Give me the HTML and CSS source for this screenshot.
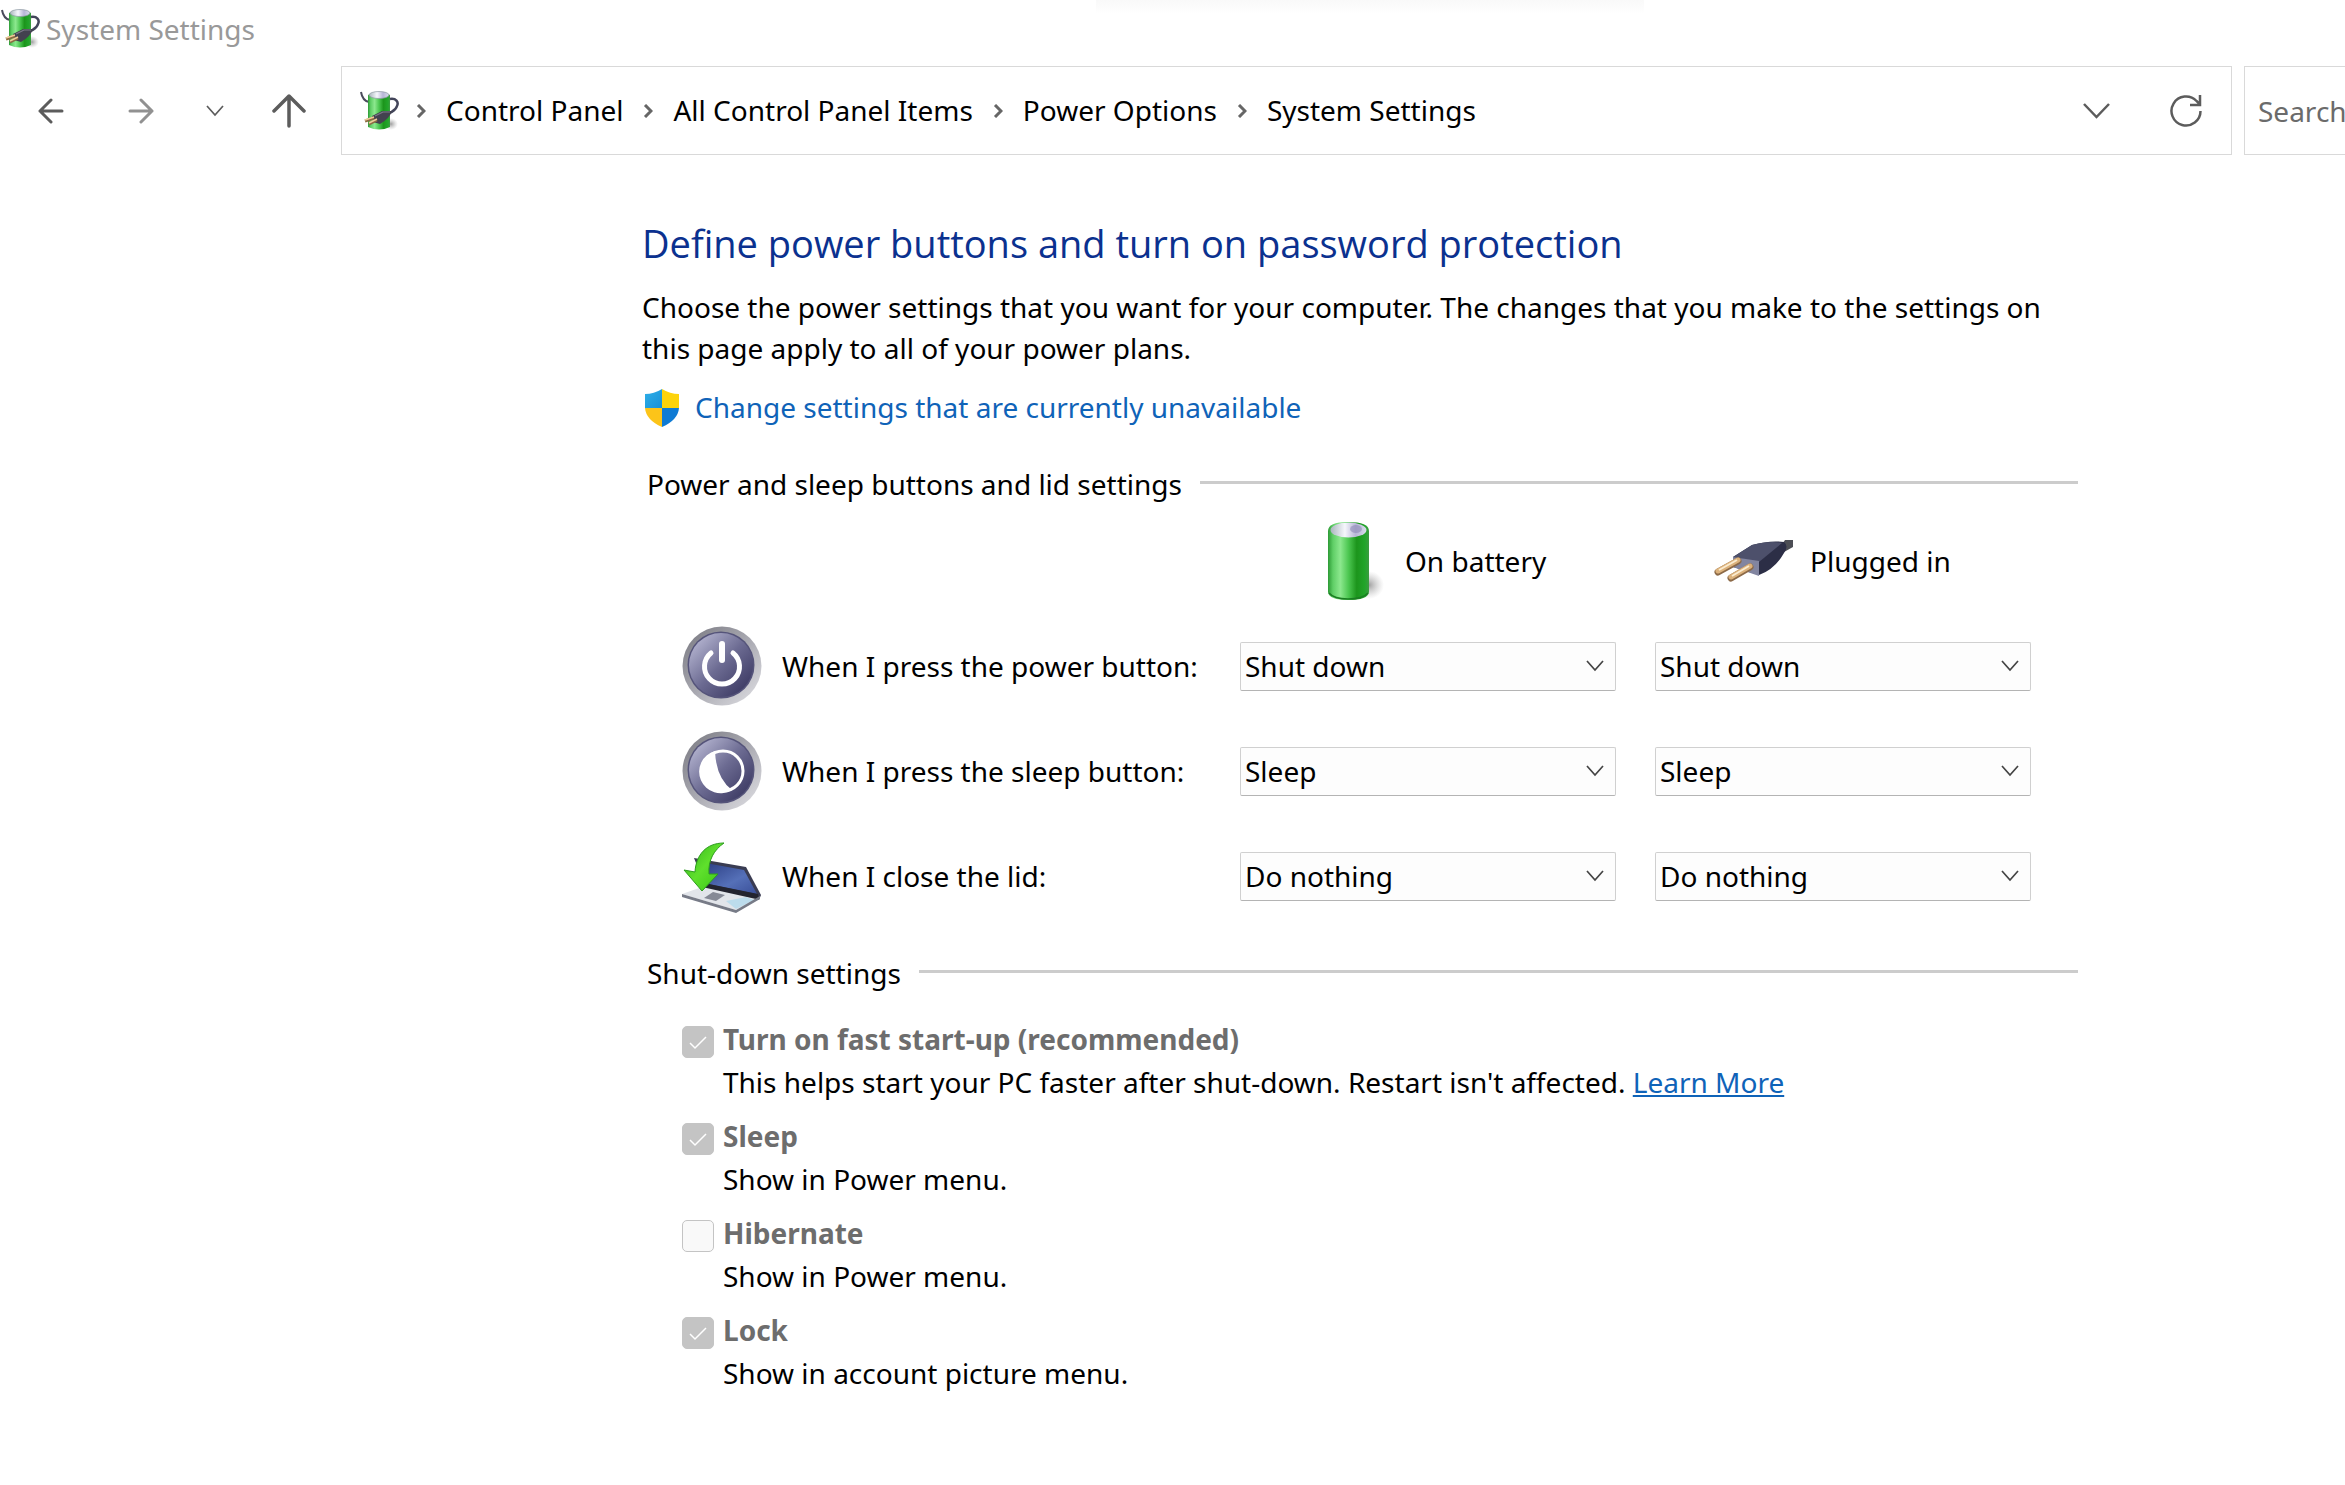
FILE: index.html
```html
<!DOCTYPE html>
<html lang="en-GB">
<head>
<meta charset="utf-8">
<title>System Settings</title>
<link rel="stylesheet" href="styles.css">
</head>
<body>
<svg class="defs" width="0" height="0" aria-hidden="true">
  <defs>
    <linearGradient id="green" x1="0" x2="1" y1="0" y2="0">
      <stop offset="0" stop-color="#2c9a35"/><stop offset=".12" stop-color="#5fce66"/><stop offset=".3" stop-color="#8ce88e"/><stop offset=".5" stop-color="#4cc751"/><stop offset=".7" stop-color="#1c951c"/><stop offset=".9" stop-color="#22a52a"/><stop offset="1" stop-color="#3c9c42"/>
    </linearGradient>
    <linearGradient id="cap" x1="0" x2="1" y1="0" y2="0">
      <stop offset="0" stop-color="#a9b5bd"/><stop offset=".4" stop-color="#f6f7fc"/><stop offset=".7" stop-color="#b7b5d6"/><stop offset="1" stop-color="#d8dcea"/>
    </linearGradient>
    <radialGradient id="shade">
      <stop offset="0" stop-color="#777" stop-opacity=".7"/><stop offset="1" stop-color="#aaa" stop-opacity="0"/>
    </radialGradient>
    <linearGradient id="rim" x1="0" x2="1" y1="0" y2="1">
      <stop offset="0" stop-color="#77777f"/><stop offset=".5" stop-color="#a9a9b1"/><stop offset="1" stop-color="#e2e2e6"/>
    </linearGradient>
    <linearGradient id="face" x1="0" x2="1" y1="0" y2="1">
      <stop offset=".1" stop-color="#b4b4d0"/><stop offset=".5" stop-color="#6c6b92"/><stop offset=".9" stop-color="#3c3a63"/>
    </linearGradient>
    <linearGradient id="screen" x1="0" x2="1" y1="0" y2="1">
      <stop offset="0" stop-color="#27397e"/><stop offset=".6" stop-color="#5570b8"/><stop offset="1" stop-color="#3a4f98"/>
    </linearGradient>
    <linearGradient id="arrow" x1="0" x2="1" y1="0" y2="1">
      <stop offset="0" stop-color="#2fae1c"/><stop offset=".5" stop-color="#5fe02c"/><stop offset="1" stop-color="#37c414"/>
    </linearGradient>
    <linearGradient id="blue" x1="0" x2="1" y1="0" y2="1">
      <stop offset="0" stop-color="#2fb0e8"/><stop offset="1" stop-color="#1890d8"/>
    </linearGradient>
    <symbol id="power-options" viewBox="0 0 40 40">
      <ellipse cx="32" cy="33" rx="7" ry="6" fill="url(#shade)"/>
      <path d="M2 1 C3 7 5 10 10 11" fill="none" stroke="#4a4b5c" stroke-width="2"/>
      <path d="M9 4 Q20-2 31 4 V36 Q20 41 9 36z" fill="url(#green)"/>
      <ellipse cx="20" cy="4" rx="10" ry="3.500" fill="url(#cap)" stroke="#8d9aa2" stroke-width=".7"/>
      <path d="M31 8 C37 7 40 11 38 15 C37 19 34 20 31 22" fill="none" stroke="#43455a" stroke-width="2.500"/>
      <path d="M13 25 L23 20 L33 20 Q31 27 21 33 L14 31z" fill="#43424f"/>
      <path d="M16 25 L24 21 L31 21" stroke="#7c7a8a" stroke-width="1.200" fill="none"/>
      <path d="M6 30 L15 27 M10 33 L18 29" stroke="#8b6a42" stroke-width="3"/>
      <path d="M6 29 L15 26 M10 32 L18 28" stroke="#edcb98" stroke-width="1.500"/>
    </symbol>
    <symbol id="chevron" viewBox="0 0 18 12"><path d="M1 1 L9 10 L17 1" fill="none" stroke="currentColor" stroke-width="1.700"/></symbol>
    <symbol id="crumb" viewBox="0 0 10 14"><path d="M2 1 L8 7 L2 13" fill="none" stroke="currentColor" stroke-width="3"/></symbol>
    <symbol id="tick" viewBox="0 0 32 32"><path d="M8 17 L13 22 L24 11" fill="none" stroke="#fff" stroke-width="1.500"/></symbol>
  </defs>
</svg>

<header class="window-head">
  <div class="titlebar">
    <svg class="app-icon" aria-hidden="true"><use href="#power-options"/></svg>
    <span>System Settings</span>
  </div>
  <div class="toolbar">
    <div class="nav-buttons">
      <button class="nav-button" aria-label="Back"><svg width="26" height="26" viewBox="0 0 26 26"><path d="M24 13H2M13 2L2 13L13 24" fill="none" stroke="#5c5c5c" stroke-width="3" stroke-linecap="round" stroke-linejoin="round"/></svg></button>
      <button class="nav-button" aria-label="Forward"><svg width="26" height="26" viewBox="0 0 26 26"><path d="M2 13H24M13 2L24 13L13 24" fill="none" stroke="#919191" stroke-width="3" stroke-linecap="round" stroke-linejoin="round"/></svg></button>
      <button class="nav-button narrow" aria-label="Recent locations"><svg width="18" height="12"><use href="#chevron"/></svg></button>
      <button class="nav-button" aria-label="Up"><svg width="34" height="34" viewBox="0 0 34 34"><path d="M17 32V3M2 17L17 2L32 17" fill="none" stroke="#5c5c5c" stroke-width="3.500" stroke-linecap="round" stroke-linejoin="round"/></svg></button>
    </div>
    <nav class="address" aria-label="Address">
      <svg class="app-icon" aria-hidden="true"><use href="#power-options"/></svg>
      <svg class="crumb-sep" aria-hidden="true"><use href="#crumb"/></svg>
      <a href="#">Control Panel</a>
      <svg class="crumb-sep" aria-hidden="true"><use href="#crumb"/></svg>
      <a href="#">All Control Panel Items</a>
      <svg class="crumb-sep" aria-hidden="true"><use href="#crumb"/></svg>
      <a href="#">Power Options</a>
      <svg class="crumb-sep" aria-hidden="true"><use href="#crumb"/></svg>
      <a href="#">System Settings</a>
      <div class="address-tools">
        <button class="nav-button" aria-label="Previous locations"><svg width="27" height="16" viewBox="0 0 27 16"><path d="M1 1L13.500 14L26 1" fill="none" stroke="#5c5c5c" stroke-width="2.500"/></svg></button>
        <button class="nav-button" aria-label="Refresh"><svg width="34" height="34" viewBox="0 0 34 34"><path d="M31.500 17A14.500 14.500 0 1 1 27.500 7L31 10.500M31 1V11H21" fill="none" stroke="#5c5c5c" stroke-width="2.500"/></svg></button>
      </div>
    </nav>
    <input class="search" type="text" placeholder="Search" aria-label="Search Control Panel">
  </div>
</header>

<main class="content">
  <h1>Define power buttons and turn on password protection</h1>
  <p class="intro">Choose the power settings that you want for your computer. The changes that you make to the settings on this page apply to all of your power plans.</p>
  <a class="admin-link" href="#">
    <svg width="36" height="38" viewBox="0 0 36 38" aria-hidden="true">
      <path d="M18 0 Q10 5 1 5 V19 H18z" fill="url(#blue)"/>
      <path d="M18 0 Q26 5 35 5 V19 H18z" fill="#fdd30b"/>
      <path d="M1 19 Q2 31 18 38 V19z" fill="#fcc419"/>
      <path d="M35 19 Q34 31 18 38 V19z" fill="#0f7bd4"/>
    </svg>
    <span>Change settings that are currently unavailable</span>
  </a>

  <section class="group">
    <h2>Power and sleep buttons and lid settings</h2>
    <div class="lid-grid">
      <div class="column-head battery">
        <svg width="64" height="80" viewBox="0 0 64 80" aria-hidden="true">
          <ellipse cx="41" cy="64" rx="15" ry="14" fill="url(#shade)"/>
          <path d="M0 10 Q0 1 20 1 Q41 1 41 10 V71 Q40 79 20 79 Q1 79 0 71z" fill="url(#green)"/>
          <path d="M1 72 Q6 78 20 78 Q35 78 40 72" fill="none" stroke="#1b7e22" stroke-width="1.500"/>
          <ellipse cx="20.500" cy="9" rx="18" ry="7.500" fill="url(#cap)"/>
          <ellipse cx="28" cy="8" rx="6" ry="4" fill="#8d89b8" opacity=".6"/>
        </svg>
        <span>On battery</span>
      </div>
      <div class="column-head plug">
        <svg width="80" height="44" viewBox="0 0 80 44" aria-hidden="true">
          <path d="M66 8 L71 1 H79 V8 L70 13z" fill="#4c4e55"/>
          <path d="M19 18 L38 6 Q56 1 70 3 Q75 7 70 14 Q61 30 45 36 L19 28z" fill="#2c2e46"/>
          <path d="M19 18 L38 6 Q56 1 68 4 L45 23z" fill="#4d506b"/>
          <path d="M19 18 L45 22 V37 L19 28z" fill="#8285a0"/>
          <path d="M4 33 L24 22 M17 39 L36 28" stroke="#8c6a48" stroke-width="7" stroke-linecap="round"/>
          <path d="M4 32 L24 21 M17 38 L36 27" stroke="#dcb27c" stroke-width="5" stroke-linecap="round"/>
          <path d="M5 31 L23 21 M18 37 L35 27" stroke="#fbecd0" stroke-width="2"/>
        </svg>
        <span>Plugged in</span>
      </div>

      <div class="row-label">
        <svg width="80" height="80" viewBox="0 0 80 80" aria-hidden="true">
          <circle cx="40" cy="40" r="39.500" fill="url(#rim)"/><circle cx="39" cy="39" r="33.500" fill="#55547a"/><circle cx="39" cy="39" r="32" fill="url(#face)"/>
          <path d="M29 27 A17.500 17.500 0 1 0 51 27" fill="none" stroke="#fff" stroke-width="5" stroke-linecap="round"/><path d="M40 18V34" stroke="#fff" stroke-width="6" stroke-linecap="round"/>
        </svg>
        <span id="lbl-power">When I press the power button:</span>
      </div>
      <div class="select"><select aria-labelledby="lbl-power"><option>Shut down</option></select><svg><use href="#chevron"/></svg></div>
      <div class="select"><select aria-labelledby="lbl-power"><option>Shut down</option></select><svg><use href="#chevron"/></svg></div>

      <div class="row-label">
        <svg width="80" height="80" viewBox="0 0 80 80" aria-hidden="true">
          <circle cx="40" cy="40" r="39.500" fill="url(#rim)"/><circle cx="39" cy="39" r="33.500" fill="#55547a"/><circle cx="39" cy="39" r="32" fill="url(#face)"/>
          <circle cx="41" cy="40" r="20" fill="none" stroke="#fff" stroke-width="3"/><path d="M33 20 A21.500 21.500 0 1 0 50 59 Q34 47 33 20z" fill="#fff"/>
        </svg>
        <span id="lbl-sleep">When I press the sleep button:</span>
      </div>
      <div class="select"><select aria-labelledby="lbl-sleep"><option>Sleep</option></select><svg><use href="#chevron"/></svg></div>
      <div class="select"><select aria-labelledby="lbl-sleep"><option>Sleep</option></select><svg><use href="#chevron"/></svg></div>

      <div class="row-label">
        <svg width="80" height="80" viewBox="0 0 80 80" aria-hidden="true">
          <path d="M12 22 L64 31 L79 59 L77 64 L24 52z" fill="#3a3c52"/>
          <path d="M18 26 L62 34 L75 58 L26 48z" fill="url(#screen)"/>
          <path d="M22 47 L76 58 L77 63 L60 66 L22 54z" fill="#23242f"/>
          <path d="M0 58 L20 51 L74 63 L54 74z" fill="#e2e5ea"/>
          <path d="M44 65 L64 61 L72 64 L54 73z" fill="#bcdcec"/>
          <path d="M0 58 L54 74 L78 60 V63 L54 77 L0 61z" fill="#777b87"/>
          <path d="M22 62 L31 56 L43 59 L34 65z" fill="#858995"/>
          <path d="M42 7 C24 7 14 19 13 36 L2 34 L20 55 L36 38 L27 38 C26 24 32 14 42 7z" fill="url(#arrow)" stroke="#2c9c1d"/>
        </svg>
        <span id="lbl-lid">When I close the lid:</span>
      </div>
      <div class="select"><select aria-labelledby="lbl-lid"><option>Do nothing</option></select><svg><use href="#chevron"/></svg></div>
      <div class="select"><select aria-labelledby="lbl-lid"><option>Do nothing</option></select><svg><use href="#chevron"/></svg></div>
    </div>
  </section>

  <section class="group">
    <h2>Shut-down settings</h2>
    <ul class="options">
      <li>
        <span class="check"><input type="checkbox" id="fast" checked disabled><svg><use href="#tick"/></svg></span>
        <label for="fast">Turn on fast start-up (recommended)</label>
        <p>This helps start your PC faster after shut-down. Restart isn't affected. <a href="#">Learn More</a></p>
      </li>
      <li>
        <span class="check"><input type="checkbox" id="sleep" checked disabled><svg><use href="#tick"/></svg></span>
        <label for="sleep">Sleep</label>
        <p>Show in Power menu.</p>
      </li>
      <li>
        <span class="check"><input type="checkbox" id="hibernate" disabled></span>
        <label for="hibernate">Hibernate</label>
        <p>Show in Power menu.</p>
      </li>
      <li>
        <span class="check"><input type="checkbox" id="lock" checked disabled><svg><use href="#tick"/></svg></span>
        <label for="lock">Lock</label>
        <p>Show in account picture menu.</p>
      </li>
    </ul>
  </section>
</main>
</body>
</html>
```
FILE: styles.css
```css
* { box-sizing: border-box; }

body {
  margin: 0;
  background: #fff;
  color: #000;
  font: 28px/41px "Noto Sans", "Open Sans", sans-serif;
}

h1, h2, p, ul { margin: 0; padding: 0; }
h1, h2 { font-weight: 400; }
svg { display: block; flex: none; }
.defs { position: absolute; }

.titlebar {
  display: flex;
  align-items: center;
  gap: 6px;
  height: 60px;
  padding-bottom: 2px;
  background: linear-gradient(#f9f9f9, #fff) 61% 0 / 548px 14px no-repeat;
  color: #999;
}

.app-icon { width: 40px; height: 40px; }

.toolbar {
  display: flex;
  height: 89px;
  margin-top: 6px;
}

.nav-buttons {
  display: flex;
  flex: none;
  width: 341px;
  padding-left: 6px;
}

.nav-button {
  display: flex;
  align-items: center;
  justify-content: center;
  width: 90px;
  height: 100%;
  padding: 0;
  border: 0;
  background: none;
  color: #5c5c5c;
}

.nav-button.narrow { width: 58px; }

.address {
  display: flex;
  flex: 1;
  align-items: center;
  min-width: 0;
  padding-left: 17px;
  border: 1px solid #d9d9d9;
}

.address a { color: #000; text-decoration: none; white-space: nowrap; }

.crumb-sep { width: 10px; height: 14px; margin: 0 20px; color: #666; }
.app-icon + .crumb-sep { margin-left: 17px; }

.address-tools { display: flex; height: 100%; margin-left: auto; }

.search {
  flex: none;
  width: 101px;
  margin-left: 12px;
  padding: 2px 0 0 13px;
  border: 1px solid #d9d9d9;
  border-right: 0;
  background: #fff;
  font: inherit;
}

.search::placeholder { color: #6b6b6b; opacity: 1; }

.content {
  max-width: 2078px;
  padding: 62px 0 40px 642px;
}

h1 {
  color: #0b318f;
  font-family: "Open Sans", "Noto Sans", sans-serif;
  font-size: 38px;
  line-height: 52px;
}

.intro { margin-top: 18px; }

.admin-link {
  display: flex;
  align-items: center;
  gap: 15px;
  width: fit-content;
  margin-top: 18px;
  padding-left: 2px;
  color: #0f63b8;
  text-decoration: none;
}

.group { margin-top: 36px; }

h2 {
  display: flex;
  align-items: center;
  gap: 18px;
  padding-left: 5px;
  font-size: 28px;
}

h2::after { content: ""; flex: 1; height: 3px; margin-bottom: 4px; background: #ccc; }

.lid-grid {
  display: grid;
  grid-template-columns: 1fr 376px 376px;
  grid-auto-rows: 80px;
  align-items: center;
  gap: 25px 39px;
  margin-top: 16px;
  padding: 0 47px 1px 40px;
}

.column-head { display: flex; align-items: center; }
.column-head.battery { grid-column: 2; gap: 13px; padding-left: 88px; }
.column-head.plug { gap: 16px; padding-left: 59px; }

.row-label { display: flex; align-items: center; gap: 20px; white-space: nowrap; }

.select { display: grid; align-items: center; }
.select > * { grid-area: 1 / 1; }
.select svg { width: 18px; height: 12px; margin-right: 12px; justify-self: end; pointer-events: none; color: #444; }

select {
  appearance: none;
  width: 100%;
  height: 49px;
  padding: 0 4px;
  border: 1px solid #d0d0d0;
  border-bottom-color: #b4b4b4;
  border-radius: 2px;
  background: #fdfdfd;
  color: #000;
  font: inherit;
}

.options {
  display: grid;
  gap: 13px;
  margin-top: 25px;
  padding-left: 40px;
  list-style: none;
}

.options li {
  display: grid;
  grid-template-columns: 32px 1fr;
  align-items: center;
  gap: 2px 9px;
}

.options label { color: #6d6d6d; font-weight: 700; }
.options p { grid-column: 2; }
.options a { color: #0f63b8; }

.check { display: grid; padding-top: 4px; }
.check > * { grid-area: 1 / 1; width: 32px; height: 32px; }

.check input {
  appearance: none;
  margin: 0;
  border: 1px solid #c4c4c4;
  border-radius: 5px;
  background: #f9f9f9;
}

.check input:checked { background: #c4c4c4; }
```
